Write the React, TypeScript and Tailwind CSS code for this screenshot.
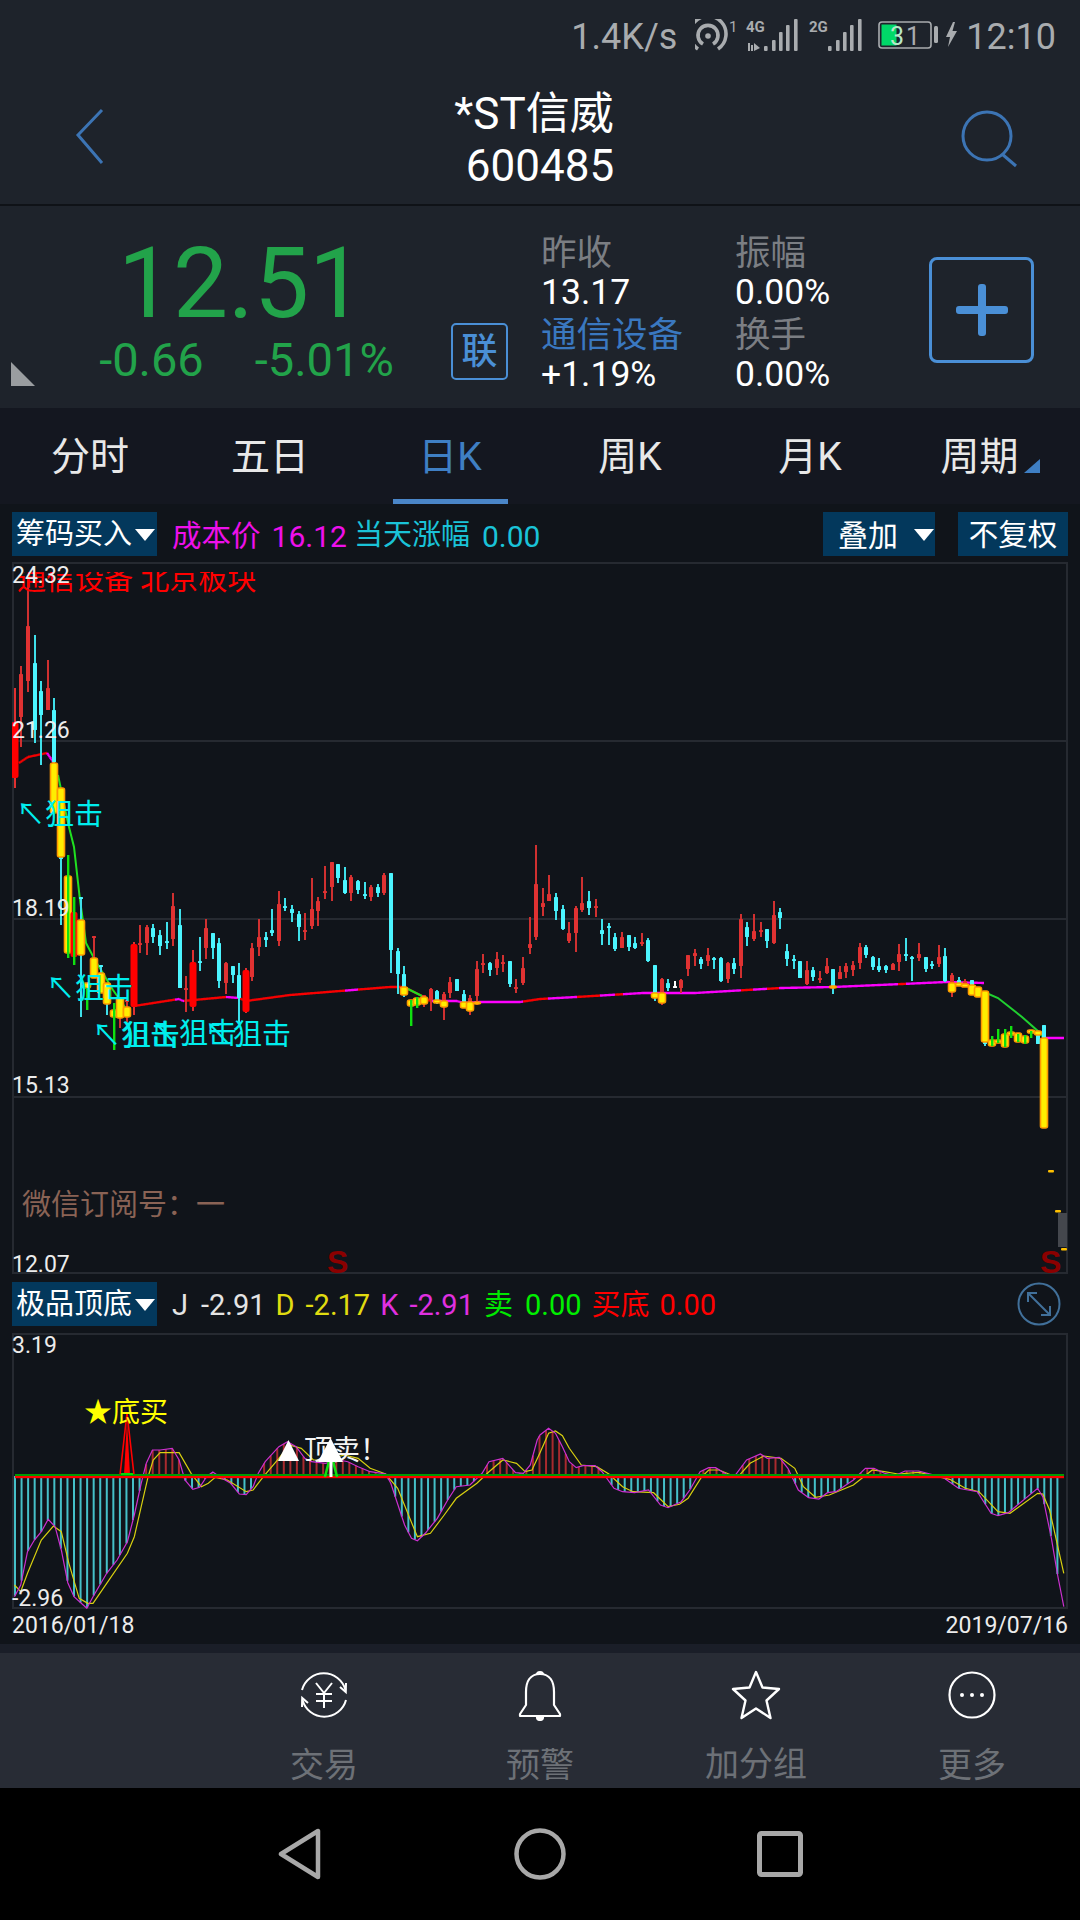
import React from "react";

type Kind = "r" | "c" | "R" | "y" | "w";
type Candle = [number, number, number, number, number, Kind];

const candles: Candle[] = [
  [15, 688, 722, 778, 788, "R"],
  [21, 666, 674, 717, 747, "r"],
  [28, 578, 626, 681, 692, "r"],
  [35, 635, 663, 730, 743, "c"],
  [41, 681, 691, 715, 765, "c"],
  [48, 660, 688, 710, 710, "r"],
  [54, 698, 710, 762, 763, "c"],
  [61, 857, 857, 858, 925, "c"],
  [81, 897, 897, 898, 1017, "c"],
  [94, 936, 936, 937, 958, "r"],
  [101, 965, 965, 966, 980, "c"],
  [107, 990, 990, 991, 1015, "c"],
  [120, 998, 998, 999, 1028, "r"],
  [127, 1000, 1000, 1001, 1025, "r"],
  [54, 763, 763, 813, 813, "y"],
  [61, 788, 788, 857, 857, "y"],
  [68, 876, 876, 953, 953, "y"],
  [74, 912, 912, 957, 957, "R"],
  [81, 920, 920, 955, 955, "y"],
  [87, 983, 983, 988, 988, "y"],
  [94, 958, 958, 978, 978, "y"],
  [101, 973, 973, 993, 993, "y"],
  [107, 983, 983, 1004, 1004, "y"],
  [114, 1010, 1010, 1017, 1017, "y"],
  [120, 998, 998, 1018, 1018, "y"],
  [127, 1007, 1007, 1017, 1017, "y"],
  [134, 942, 944, 1007, 1015, "R"],
  [140, 925, 943, 945, 953, "r"],
  [147, 925, 927, 943, 955, "r"],
  [153, 924, 928, 937, 943, "c"],
  [160, 930, 935, 946, 955, "c"],
  [167, 922, 941, 942, 949, "c"],
  [173, 893, 906, 939, 946, "r"],
  [180, 909, 925, 988, 988, "c"],
  [186, 976, 988, 989, 1012, "r"],
  [193, 950, 962, 1007, 1011, "R"],
  [200, 937, 961, 962, 971, "c"],
  [206, 919, 928, 948, 959, "r"],
  [213, 933, 933, 948, 959, "c"],
  [219, 938, 943, 981, 988, "c"],
  [226, 962, 963, 983, 994, "r"],
  [233, 966, 966, 975, 983, "c"],
  [239, 963, 975, 998, 1023, "c"],
  [246, 968, 970, 1012, 1013, "R"],
  [252, 943, 948, 977, 981, "r"],
  [259, 919, 937, 947, 956, "r"],
  [266, 932, 937, 940, 947, "c"],
  [272, 909, 930, 933, 936, "c"],
  [279, 891, 904, 941, 946, "r"],
  [285, 898, 906, 907, 911, "c"],
  [292, 905, 909, 913, 922, "c"],
  [299, 911, 914, 927, 941, "c"],
  [305, 913, 930, 931, 940, "r"],
  [312, 878, 909, 926, 929, "r"],
  [318, 897, 901, 911, 926, "r"],
  [325, 866, 891, 892, 899, "r"],
  [332, 862, 862, 887, 901, "r"],
  [338, 864, 864, 878, 883, "c"],
  [345, 867, 880, 893, 894, "c"],
  [351, 875, 877, 893, 901, "r"],
  [358, 880, 881, 890, 894, "c"],
  [365, 882, 894, 895, 899, "c"],
  [371, 885, 887, 897, 901, "r"],
  [378, 884, 887, 893, 897, "c"],
  [384, 873, 875, 893, 895, "r"],
  [391, 873, 873, 950, 973, "c"],
  [398, 948, 951, 974, 994, "c"],
  [404, 966, 974, 987, 997, "c"],
  [404, 987, 987, 995, 995, "y"],
  [411, 1000, 1000, 1006, 1006, "y"],
  [417, 998, 998, 1005, 1005, "y"],
  [424, 995, 995, 996, 1007, "r"],
  [424, 997, 997, 1004, 1004, "y"],
  [431, 988, 989, 1000, 1011, "r"],
  [437, 990, 991, 1000, 1004, "c"],
  [437, 1000, 1000, 1003, 1003, "y"],
  [444, 992, 994, 1001, 1020, "r"],
  [444, 1001, 1001, 1007, 1007, "y"],
  [450, 977, 982, 993, 998, "r"],
  [457, 979, 979, 991, 991, "c"],
  [464, 990, 994, 1002, 1002, "c"],
  [464, 1002, 1002, 1008, 1008, "y"],
  [470, 995, 998, 1002, 1015, "r"],
  [470, 1002, 1002, 1011, 1011, "y"],
  [477, 961, 969, 996, 1005, "r"],
  [477, 1002, 1002, 1003, 1003, "y"],
  [483, 954, 963, 964, 973, "r"],
  [490, 962, 963, 970, 976, "c"],
  [497, 952, 959, 968, 975, "r"],
  [503, 955, 962, 963, 972, "r"],
  [510, 961, 961, 984, 987, "c"],
  [516, 979, 987, 988, 993, "r"],
  [523, 957, 968, 983, 985, "r"],
  [530, 917, 944, 948, 954, "r"],
  [536, 845, 884, 937, 940, "r"],
  [543, 888, 903, 907, 916, "r"],
  [549, 875, 894, 901, 901, "r"],
  [556, 893, 897, 911, 920, "c"],
  [563, 905, 909, 929, 930, "c"],
  [569, 922, 933, 941, 943, "r"],
  [576, 906, 908, 933, 952, "r"],
  [582, 877, 903, 910, 912, "r"],
  [589, 891, 901, 908, 915, "c"],
  [596, 899, 906, 907, 917, "r"],
  [602, 919, 930, 934, 945, "c"],
  [609, 923, 926, 927, 945, "c"],
  [615, 933, 937, 949, 951, "c"],
  [622, 932, 937, 948, 948, "r"],
  [629, 935, 935, 947, 951, "c"],
  [635, 937, 943, 948, 949, "c"],
  [642, 933, 942, 943, 946, "r"],
  [648, 938, 940, 961, 962, "c"],
  [655, 965, 965, 993, 1001, "c"],
  [655, 993, 993, 998, 998, "y"],
  [662, 978, 979, 993, 1005, "r"],
  [662, 993, 993, 1003, 1003, "y"],
  [668, 979, 983, 988, 991, "c"],
  [675, 981, 986, 988, 988, "w"],
  [681, 979, 980, 988, 993, "r"],
  [688, 955, 955, 969, 976, "r"],
  [695, 949, 953, 956, 966, "r"],
  [701, 957, 959, 964, 969, "c"],
  [708, 948, 955, 961, 966, "r"],
  [714, 957, 958, 959, 969, "c"],
  [721, 957, 958, 981, 982, "c"],
  [728, 962, 963, 979, 983, "r"],
  [734, 958, 963, 969, 974, "c"],
  [741, 914, 919, 966, 978, "r"],
  [747, 922, 927, 937, 946, "c"],
  [754, 914, 931, 939, 941, "r"],
  [761, 922, 930, 931, 937, "r"],
  [767, 929, 929, 941, 948, "c"],
  [774, 901, 915, 943, 944, "r"],
  [780, 908, 912, 918, 929, "c"],
  [787, 944, 951, 959, 966, "c"],
  [794, 955, 959, 960, 969, "c"],
  [800, 961, 961, 978, 978, "c"],
  [807, 961, 970, 984, 985, "r"],
  [813, 967, 970, 977, 981, "c"],
  [820, 971, 978, 979, 983, "r"],
  [827, 958, 966, 973, 974, "r"],
  [833, 969, 969, 987, 994, "c"],
  [833, 986, 986, 987, 987, "y"],
  [840, 966, 972, 979, 979, "r"],
  [846, 963, 966, 972, 978, "r"],
  [853, 961, 965, 970, 976, "r"],
  [860, 943, 947, 963, 969, "r"],
  [866, 945, 947, 955, 958, "c"],
  [873, 956, 957, 967, 970, "c"],
  [879, 958, 966, 970, 972, "c"],
  [886, 965, 966, 970, 973, "c"],
  [893, 963, 964, 970, 970, "r"],
  [899, 944, 954, 962, 971, "r"],
  [906, 938, 954, 955, 961, "c"],
  [912, 956, 957, 958, 981, "c"],
  [919, 943, 954, 958, 961, "r"],
  [926, 957, 957, 969, 972, "c"],
  [932, 961, 964, 965, 969, "c"],
  [939, 945, 957, 964, 967, "r"],
  [945, 948, 956, 981, 982, "c"],
  [952, 973, 975, 983, 997, "r"],
  [952, 983, 983, 992, 992, "y"],
  [959, 977, 980, 983, 985, "c"],
  [959, 983, 983, 986, 986, "y"],
  [965, 979, 981, 984, 987, "r"],
  [965, 984, 984, 987, 987, "y"],
  [972, 980, 980, 985, 995, "c"],
  [972, 985, 985, 995, 995, "y"],
  [978, 987, 987, 997, 999, "y"],
  [985, 1042, 1042, 1043, 1046, "c"],
  [985, 991, 991, 1042, 1042, "y"],
  [992, 1040, 1040, 1046, 1046, "y"],
  [998, 1040, 1040, 1043, 1043, "y"],
  [1005, 1034, 1034, 1047, 1047, "y"],
  [1011, 1032, 1032, 1035, 1035, "y"],
  [1018, 1033, 1033, 1042, 1042, "y"],
  [1025, 1036, 1036, 1043, 1043, "y"],
  [1031, 1030, 1030, 1033, 1033, "y"],
  [1038, 1035, 1035, 1044, 1044, "c"],
  [1038, 1031, 1031, 1035, 1035, "y"],
  [1044, 1025, 1025, 1038, 1038, "c"],
  [1044, 1038, 1038, 1128, 1128, "y"],
];

const greenWicks: [number, number, number][] = [
  [68, 855, 958],
  [74, 897, 965],
  [87, 988, 1010],
  [114, 1003, 1050],
  [411, 1000, 1026],
  [417, 997, 1008],
  [992, 1036, 1046],
  [998, 1029, 1043],
  [1005, 1029, 1047],
  [1011, 1026, 1038],
  [1018, 1034, 1042],
  [1025, 1035, 1044],
  [1031, 1031, 1038],
];

const bodyFill: Record<Kind, string> = { r: "#e03232", c: "#4cf5ff", R: "#ff0000", y: "#ffee00", w: "#ffffff" };
const wickFill: Record<Kind, string> = { r: "#d03030", c: "#3fe0ea", R: "#e03030", y: "#ff9a00", w: "#ffffff" };

const cost: [number, number][] = [
  [19, 763], [28, 757], [47, 753], [54, 763],
  [134, 1006], [179, 999], [183, 1001], [226, 997], [239, 998], [246, 1001], [290, 995], [340, 991], [390, 987], [404, 987],
  [424, 997], [430, 1001], [457, 1001], [464, 1003], [480, 1002], [520, 1002], [540, 999], [576, 997], [643, 993], [695, 993], [781, 988], [833, 987], [902, 984], [946, 982], [984, 983],
  [1046, 1038], [1064, 1038],
];
const magentaRanges: [number, number][] = [
  [19, 19], [47, 58], [175, 184], [226, 238], [345, 358], [430, 523], [548, 577], [600, 615], [623, 741], [753, 767], [779, 898], [906, 984], [1046, 1064],
];
function isMagenta(x: number) {
  return magentaRanges.some(([a, b]) => x >= a && x < b);
}
function costSegments() {
  const out: { x1: number; y1: number; x2: number; y2: number; c: string }[] = [];
  for (let i = 0; i < cost.length - 1; i++) {
    const [ax, ay] = cost[i];
    const [bx, by] = cost[i + 1];
    if ((ax === 54 && bx === 134) || (ax === 984 && bx === 1046)) continue;
    for (let x = ax; x < bx; x += 1) {
      const t1 = (x - ax) / (bx - ax);
      const nx = Math.min(x + 1, bx);
      const t2 = (nx - ax) / (bx - ax);
      out.push({ x1: x, y1: ay + (by - ay) * t1, x2: nx, y2: ay + (by - ay) * t2, c: isMagenta(x) ? "#ff00ff" : "#ff0000" });
    }
  }
  return out;
}
const greenA = "58,775 68,823 74,847 80,900 86,943 95,960 113,990 125,1007";
const greenB = "404,987 424,997";
const greenC = "984,992 998,998 1022,1017 1039,1032 1044,1038";

const zL = (a: number[][]) => a.map(([x, y]) => [x / 2.904, 1270 + y / 3]);
const zR = (a: number[][]) => a.map(([x, y]) => [540 + x / 2.904, 1270 + y / 3]);

const K = [
  ...zL([[42,980],[60,945],[80,845],[100,810],[120,785],[140,748],[160,770],[178,840],[197,938],[215,980],[252,1015],[270,980],[310,910],[340,870],[370,815],[390,735],[410,640],[425,580],[443,540],[465,540],[500,535],[520,570],[537,630],[560,658],[580,652],[600,620],[618,606],[640,622],[670,640],[695,672],[715,674],[735,650],[750,610],[770,575],[810,530],[835,515],[860,530],[885,565],[905,575],[945,580],[985,570],[1010,575],[1040,590],[1075,605],[1120,612],[1135,640],[1175,765],[1195,805],[1212,812],[1235,790],[1270,745],[1300,690],[1325,650],[1365,645],[1400,610],[1420,575],[1460,565],[1497,608],[1520,610],[1540,585],[1560,510]]),
  ...zR([[0,495],[25,475],[45,490],[65,530],[85,575],[105,593],[125,587],[160,587],[180,605],[215,655],[240,665],[275,668],[315,660],[350,705],[372,713],[410,695],[435,660],[465,605],[490,593],[510,593],[540,612],[565,618],[600,570],[640,552],[660,565],[695,562],[720,595],[750,660],[780,683],[810,687],[835,668],[860,665],[910,630],[945,595],[970,595],[1000,610],[1030,617],[1060,603],[1100,603],[1150,617],[1170,622],[1215,655],[1270,665],[1310,730],[1330,737],[1360,728],[1445,655],[1460,680],[1485,805],[1503,915],[1521,1010]]),
];
const D = [
  ...zL([[42,945],[60,965],[80,910],[120,810],[155,768],[178,785],[200,880],[230,985],[255,1000],[270,1000],[310,940],[370,850],[390,800],[410,710],[430,620],[445,570],[465,548],[520,548],[555,610],[585,650],[605,640],[625,622],[660,630],[715,665],[735,660],[765,620],[810,565],[840,525],[875,535],[910,570],[945,570],[1000,555],[1040,565],[1075,595],[1120,612],[1155,655],[1190,745],[1212,800],[1250,790],[1290,735],[1325,685],[1385,640],[1420,605],[1460,570],[1500,580],[1525,605],[1545,600]]),
  ...zR([[0,548],[25,490],[45,483],[65,497],[85,535],[120,585],[165,590],[200,612],[240,650],[270,665],[330,668],[372,710],[405,703],[430,685],[470,620],[490,600],[520,600],[555,615],[580,615],[610,580],[650,558],[700,565],[740,595],[765,650],[800,682],[840,675],[910,645],[965,600],[1000,605],[1040,612],[1100,607],[1190,628],[1235,655],[1275,665],[1330,725],[1365,730],[1445,670],[1460,672],[1480,720],[1521,910]]),
];
function kAt(x: number) {
  for (let i = 0; i < K.length - 1; i++) {
    if (x >= K[i][0] && x <= K[i + 1][0]) {
      const t = (x - K[i][0]) / (K[i + 1][0] - K[i][0]);
      return K[i][1] + (K[i + 1][1] - K[i][1]) * t;
    }
  }
  return 1476;
}
const toPts = (a: number[][]) => a.map(([x, y]) => `${x.toFixed(1)},${y.toFixed(1)}`).join(" ");

function Tri() {
  return (
    <svg width="20" height="12" viewBox="0 0 20 12" className="shrink-0">
      <polygon points="0,0 20,0 10,12" fill="#ffffff" />
    </svg>
  );
}

function MainChart() {
  return (
    <svg className="absolute left-[-2px] top-[-2px] w-[1056px] h-[712px]" viewBox="12 562 1056 712">
      <rect x="12" y="740" width="1056" height="2" fill="#262a31" />
      <rect x="12" y="918" width="1056" height="2" fill="#262a31" />
      <rect x="12" y="1096" width="1056" height="2" fill="#262a31" />
      {costSegments().map((s, i) => (
        <line key={i} x1={s.x1} y1={s.y1} x2={s.x2} y2={s.y2} stroke={s.c} strokeWidth="2.4" />
      ))}
      <polyline points={greenA} fill="none" stroke="#20e020" strokeWidth="2" />
      <polyline points={greenB} fill="none" stroke="#20e020" strokeWidth="2" />
      <polyline points={greenC} fill="none" stroke="#20d030" strokeWidth="2" />
      {candles.map(([x, wt, bt, bb, wb, k], i) => {
        const isY = k === "y";
        const big = k === "R" || isY;
        const w = big ? 7 : 4;
        const h = Math.max(bb - bt, 2);
        return (
          <g key={i}>
            {wt < wb && !isY ? <rect x={x - 1} y={wt} width="2" height={wb - wt} fill={wickFill[k]} /> : null}
            <rect
              x={x - w / 2}
              y={bt}
              width={w}
              height={h}
              rx={big ? 2 : 0.5}
              fill={bodyFill[k]}
              stroke={isY ? "#ff9a00" : "none"}
              strokeWidth={isY ? 1.6 : 0}
            />
          </g>
        );
      })}
      {greenWicks.map(([x, a, b], i) => (
        <rect key={i} x={x - 1} y={a} width="2.4" height={b - a} fill="#10e010" />
      ))}
      <rect x="1048" y="1170" width="6" height="2.5" rx="1" fill="#ffc000" />
      <rect x="1055" y="1210" width="6" height="2.5" rx="1" fill="#ffc000" />
      <rect x="1061" y="1248" width="6" height="2.5" rx="1" fill="#ffc000" />
      <rect x="1058" y="1213" width="9" height="34" fill="#44474d" />
    </svg>
  );
}

function SubChart() {
  const bars: { x: number; y: number }[] = [];
  for (let i = 0; i <= 160; i++) {
    const x = 15 + i * 6.556;
    bars.push({ x, y: kAt(x) });
  }
  return (
    <svg className="absolute left-[-2px] top-[-2px] w-[1056px] h-[276px]" viewBox="12 1333 1056 276">
      {bars.map((b, i) =>
        Math.abs(b.y - 1476) < 1.5 ? null : (
          <rect
            key={i}
            x={b.x - 1}
            y={Math.min(b.y, 1476)}
            width="2"
            height={Math.abs(b.y - 1476)}
            fill={b.y > 1476 ? "#45c0c8" : "#a82a2e"}
          />
        ),
      )}
      <polyline points={toPts(D)} fill="none" stroke="#d8d010" strokeWidth="1.2" />
      <polyline points={toPts(K)} fill="none" stroke="#cc30d0" strokeWidth="1.2" />
      <polygon points="120,1475 127,1413 134,1475" fill="none" stroke="#ff0000" strokeWidth="1.6" />
      <polygon points="124,1475 127,1420 130,1475" fill="#ff0000" />
      <rect x="15" y="1474" width="1049" height="2" fill="#009a00" />
      <rect x="15" y="1476" width="1049" height="2.2" fill="#ff0000" />
      <rect x="121" y="1473" width="12" height="2" fill="#00dd00" />
      <polygon points="278,1461 299,1461 288.500,1440" fill="#ffffff" />
    </svg>
  );
}

function SubOverlay() {
  return (
    <svg className="absolute left-[-2px] top-[-2px] w-[1056px] h-[276px]" viewBox="12 1333 1056 276">
      <path d="M325,1477 L329,1461 M337,1477 L333,1461" stroke="#10e010" strokeWidth="2.6" fill="none" />
      <polygon points="318,1462 343,1462 330.500,1438" fill="#ffffff" />
      <rect x="329.500" y="1460" width="3" height="17" fill="#ffffff" />
    </svg>
  );
}

function ExchangeIcon() {
  return (
    <svg width="50" height="50" viewBox="0 0 50 50" fill="none" stroke="#ffffff" strokeWidth="2">
      <path d="M3 20 A22.500 22.500 0 0 1 46.500 20" />
      <path d="M47 13 L46.800 22 L41 17" />
      <path d="M47 30 A22.500 22.500 0 0 1 3.500 30" />
      <path d="M3 37 L3.200 28 L9 33" />
      <path d="M17 13 L25 23 L33 13 M25 23 V38 M17 24 H33 M17 31 H33" />
    </svg>
  );
}
function BellIcon() {
  return (
    <svg width="46" height="54" viewBox="0 0 46 54" fill="none" stroke="#ffffff" strokeWidth="2.200" strokeLinejoin="round">
      <path d="M20 8 A3 3 0 0 1 26 8" />
      <path d="M23 7 C13 7 9 15 9 25 V38 L3 47 V49 H43 V47 L37 38 V25 C37 15 33 7 23 7 Z" />
      <path d="M20 50 A3 3 0 0 0 26 50 Z" fill="#ffffff" />
    </svg>
  );
}
function StarIcon() {
  return (
    <svg width="52" height="52" viewBox="0 0 52 52" fill="none" stroke="#ffffff" strokeWidth="2.400" strokeLinejoin="round">
      <path d="M26 3 L32.500 18.500 L49 20 L36.500 31.500 L40.500 49 L26 39.500 L11.500 49 L15.500 31.500 L3 20 L19.500 18.500 Z" />
    </svg>
  );
}
function MoreIcon() {
  return (
    <svg width="50" height="50" viewBox="0 0 50 50" fill="none" stroke="#ffffff" strokeWidth="2.200">
      <circle cx="25" cy="25" r="22.500" />
      <circle cx="15" cy="25" r="2" fill="#ffffff" stroke="none" />
      <circle cx="25" cy="25" r="2" fill="#ffffff" stroke="none" />
      <circle cx="35" cy="25" r="2" fill="#ffffff" stroke="none" />
    </svg>
  );
}

function Cyan({ className, thick }: { className: string; thick?: boolean }) {
  return (
    <span className={`absolute text-[29px] leading-[34px] text-[#00eeee] whitespace-nowrap ${className}`}>
      ↖<span className={thick ? "[text-shadow:1px_0_0_#00eeee]" : ""}>狙击</span>
    </span>
  );
}

function Label({ className, children }: { className: string; children: React.ReactNode }) {
  return <span className={`absolute text-[23px] leading-[28px] text-[#ececec] ${className}`}>{children}</span>;
}

export default function App() {
  return (
    <div className="w-[1080px] h-[1920px] overflow-hidden flex flex-col bg-[#1e232b] font-['Roboto','Noto_Sans_CJK_SC',sans-serif]">
      {/* status bar */}
      <div className="h-[60px] flex justify-end items-center pt-[14px] pr-[24px] text-[#a9acaf] text-[36px] leading-none">
        <span>1.4K/s</span>
        <svg className="ml-[18px]" width="266" height="36" viewBox="695 20 266 36">
          <g fill="none" stroke="#a9acaf" strokeWidth="3.600" strokeLinecap="butt">
            <path d="M698 50 A18 18 0 1 1 718 50" />
            <path d="M703 45 A10 10 0 1 1 713 45" />
          </g>
          <circle cx="708" cy="37" r="2.800" fill="#a9acaf" />
          <text x="729" y="33" fontSize="15" fill="#a9acaf" fontFamily="Roboto">1</text>
          <text x="746" y="33" fontSize="15" fontWeight="700" fill="#a9acaf" fontFamily="Roboto">4G</text>
          <text x="809" y="33" fontSize="15" fontWeight="700" fill="#a9acaf" fontFamily="Roboto">2G</text>
          <g fill="#a9acaf">
            <rect x="748" y="44" width="2" height="8" />
            <rect x="751" y="46" width="2" height="6" />
            <polygon points="754,44 760,49 754,52" />
            <rect x="764" y="47" width="3.600" height="5" rx="1" />
            <rect x="772" y="41" width="3.600" height="11" rx="1" />
            <rect x="779" y="33" width="3.600" height="19" rx="1" />
            <rect x="786" y="26" width="3.600" height="26" rx="1" />
            <rect x="794" y="20" width="3.600" height="32" rx="1" />
            <rect x="828" y="47" width="3.600" height="5" rx="1" />
            <rect x="836" y="41" width="3.600" height="11" rx="1" />
            <rect x="843" y="33" width="3.600" height="19" rx="1" />
            <rect x="850" y="26" width="3.600" height="26" rx="1" />
            <rect x="858" y="20" width="3.600" height="32" rx="1" />
          </g>
          <rect x="879" y="23" width="52" height="26" rx="3" fill="none" stroke="#a9acaf" strokeWidth="1.600" />
          <rect x="881.500" y="25.500" width="15" height="21" fill="#00d868" />
          <text x="890" y="46" fontSize="25" fill="#b8e8c8" fontFamily="Roboto">3</text>
          <text x="906" y="46" fontSize="25" fill="#a9acaf" fontFamily="Roboto">1</text>
          <rect x="934" y="27" width="4" height="17" rx="1.500" fill="#a9acaf" />
          <polygon points="953,23 946,38 950,38 948,48 957,32 952.500,32 955,23" fill="#a9acaf" />
        </svg>
        <span className="ml-[5px]">12:10</span>
      </div>

      {/* title */}
      <div className="h-[144px] grid grid-cols-[1fr_auto_1fr] items-start">
        <svg className="mt-[48px] ml-[74px]" width="32" height="58" viewBox="0 0 32 58" fill="none" stroke="#3c74b4" strokeWidth="3">
          <path d="M28 2 L4 27 L28 55" />
        </svg>
        <div className="pt-[28px] flex flex-col items-center text-white text-[44px] leading-[52px]">
          <span className="mr-[12px]">*ST信威</span>
          <span>600485</span>
        </div>
        <svg className="mt-[50px] ml-auto mr-[60px]" width="60" height="60" viewBox="0 0 60 60" fill="none" stroke="#3c74b4" strokeWidth="3">
          <circle cx="27" cy="26" r="24" />
          <path d="M42 44 L56 56" />
        </svg>
      </div>
      <div className="h-[2px] bg-[#0f1217]" />

      {/* quote */}
      <div className="h-[202px] flex">
        <div className="relative w-[451px] flex flex-col items-center pl-[42px] pt-[18px]">
          <span className="mr-[11px] text-[98px] leading-[120px] text-[#22a34a]">12.51</span>
          <div className="flex gap-[51px] text-[47px] leading-[52px] text-[#22a34a] mt-[-10px] whitespace-nowrap">
            <span>-0.66</span>
            <span>-5.01%</span>
          </div>
          <svg className="absolute left-[11px] bottom-[22px]" width="24" height="24" viewBox="0 0 24 24">
            <polygon points="0,0 24,24 0,24" fill="#9a9da0" />
          </svg>
        </div>
        <div className="self-end mb-[28px] w-[57px] h-[57px] flex items-center justify-center rounded-[5px] border-2 border-[#4a8fd6] text-[#4a8fd6] text-[36px] leading-none font-medium">
          联
        </div>
        <div className="ml-[33px] mt-[25px] w-[194px] text-[35.500px] leading-[41px] text-white flex flex-col">
          <span className="text-[#7b7e83] translate-y-[2px]">昨收</span>
          <span>13.17</span>
          <span className="text-[#3a78c0] translate-y-[2px]">通信设备</span>
          <span>+1.19%</span>
        </div>
        <div className="mt-[25px] text-[35.500px] leading-[41px] text-white flex flex-col">
          <span className="text-[#7b7e83] translate-y-[2px]">振幅</span>
          <span>0.00%</span>
          <span className="text-[#7b7e83] translate-y-[2px]">换手</span>
          <span>0.00%</span>
        </div>
        <div className="ml-auto mr-[46px] mt-[51px] w-[105px] h-[106px] rounded-[8px] border-[3px] border-[#4a8fd6] flex items-center justify-center">
          <svg width="54" height="52" viewBox="0 0 54 52">
            <rect x="1" y="22" width="52" height="8" rx="3" fill="#4a8fd6" />
            <rect x="23" y="0" width="8" height="52" rx="3" fill="#4a8fd6" />
          </svg>
        </div>
      </div>

      {/* tabs */}
      <div className="h-[96px] grid grid-cols-6 bg-[#141720] text-[39px] text-[#e8e8e8] pt-[2px]">
        <div className="flex items-center justify-center">分时</div>
        <div className="flex items-center justify-center">五日</div>
        <div className="relative flex items-center justify-center text-[#3f7fc4]">
          日K
          <div className="absolute left-[33px] bottom-0 w-[115px] h-[5px] bg-[#4a86c8]" />
        </div>
        <div className="flex items-center justify-center">周K</div>
        <div className="flex items-center justify-center">月K</div>
        <div className="flex items-center justify-center">
          周期
          <svg className="ml-[5px] mt-[18px]" width="16" height="14" viewBox="0 0 16 14">
            <polygon points="16,0 16,14 0,14" fill="#3f7fc4" />
          </svg>
        </div>
      </div>

      {/* charts */}
      <div className="h-[1140px] bg-[#10141a] flex flex-col text-[30px]">
        <div className="mt-[8px] h-[44px] flex items-center [&>span]:translate-y-[2px]">
          <div className="ml-[12px] w-[145px] h-[44px] bg-[#03385c] text-white text-[29px] flex items-center pl-[4px] pt-[2px] gap-[3px] whitespace-nowrap">
            筹码买入
            <Tri />
          </div>
          <span className="ml-[15px] text-[29.500px] text-[#ee10ea]">成本价</span>
          <span className="ml-[11px] text-[#ee10ea]">16.12</span>
          <span className="ml-[7px] text-[29px] text-[#1ac3d8]">当天涨幅</span>
          <span className="ml-[12px] text-[#1ac3d8]">0.00</span>
          <div className="ml-auto w-[112px] h-[44px] bg-[#03385c] text-white text-[30px] flex items-center pl-[15px] pt-[2px] gap-[16px]">
            叠加
            <Tri />
          </div>
          <div className="ml-[23px] mr-[12px] w-[110px] h-[44px] bg-[#03385c] text-white text-[29.500px] flex items-center justify-center pt-[2px]">
            不复权
          </div>
        </div>

        <div className="relative mt-[6px] ml-[12px] w-[1056px] h-[712px] border-2 border-[#262a31]">
          <MainChart />
          <div className="absolute left-[3px] top-[8px] h-[30px] overflow-hidden">
            <div className="mt-[-7px] text-[29px] leading-[30px] text-[#ff0000] whitespace-nowrap">通信设备 北京板块</div>
          </div>
          <Cyan className="left-[2px] top-[234px]" />
          <Cyan className="left-[32px] top-[408px]" />
          <Cyan className="left-[78px] top-[455px]" thick />
          <Cyan className="left-[136px] top-[453px]" />
          <Cyan className="left-[190px] top-[454px]" />
          <Label className="left-[-2px] top-[-2px]">24.32</Label>
          <Label className="left-[-2px] top-[153px]">21.26</Label>
          <Label className="left-[-2px] top-[331px]">18.19</Label>
          <Label className="left-[-2px] top-[508px]">15.13</Label>
          <Label className="left-[-2px] top-[687px]">12.07</Label>
          <span className="absolute left-[8px] top-[621px] text-[29px] leading-[40px] text-[#8a6355] whitespace-nowrap">微信订阅号：一</span>
          <span className="absolute left-[313px] top-[680px] text-[32px] leading-[36px] font-bold text-[#8b0000] font-['Liberation_Sans',sans-serif]">S</span>
          <span className="absolute left-[1026px] top-[680px] text-[32px] leading-[36px] font-bold text-[#8b0000] font-['Liberation_Sans',sans-serif]">S</span>
        </div>

        <div className="mt-[8px] h-[44px] flex items-center text-[29px] [&>span]:translate-y-[2px]">
          <div className="ml-[12px] w-[145px] h-[44px] bg-[#03385c] text-white text-[29px] flex items-center pl-[4px] pt-[2px] gap-[3px] whitespace-nowrap">
            极品顶底
            <Tri />
          </div>
          <span className="ml-[15px] text-[#e4e4e4]">J</span>
          <span className="ml-[13px] text-[#e4e4e4]">-2.91</span>
          <span className="ml-[10px] text-[#e0dc10]">D</span>
          <span className="ml-[11px] text-[#e0dc10]">-2.17</span>
          <span className="ml-[10px] text-[#e030e0]">K</span>
          <span className="ml-[11px] text-[#e030e0]">-2.91</span>
          <span className="ml-[10px] text-[#00e800]">卖</span>
          <span className="ml-[12px] text-[#00f000]">0.00</span>
          <span className="ml-[10px] text-[#ff0000]">买底</span>
          <span className="ml-[10px] text-[#ff0000]">0.00</span>
          <svg className="ml-auto mr-[19px]" width="44" height="44" viewBox="0 0 44 44" fill="none" stroke="#41709a" strokeWidth="2">
            <circle cx="22" cy="22" r="20.500" />
            <path d="M11 11 L33 33 M11 20 V11 H20 M33 24 V33 H24" />
          </svg>
        </div>

        <div className="relative mt-[7px] ml-[12px] w-[1056px] h-[276px] border-2 border-[#262a31]">
          <SubChart />
          <Label className="left-[-2px] top-[-3px]">3.19</Label>
          <Label className="left-[-2px] top-[250px]">-2.96</Label>
          <span className="absolute left-[70px] top-[61px] text-[28px] leading-[34px] text-[#ffff00] whitespace-nowrap">★底买</span>
          <span className="absolute left-[290px] top-[99px] text-[28px] leading-[34px] text-[#f4f4f4] whitespace-nowrap">顶卖！</span>
          <SubOverlay />
        </div>

        <div className="flex-1 flex items-center justify-between px-[12px] text-[23px] text-[#ececec]">
          <span>2016/01/18</span>
          <span>2019/07/16</span>
        </div>
      </div>

      {/* stripe */}
      <div className="h-[9px] bg-[#1a1e28]" />

      {/* bottom tools */}
      <div className="h-[135px] bg-[#282c35] grid grid-cols-5 text-[#6d7177] text-[34px]">
        <div />
        <div className="flex flex-col items-center pt-[17px]">
          <ExchangeIcon />
          <span className="mt-[22px] leading-[46px]">交易</span>
        </div>
        <div className="flex flex-col items-center pt-[14px]">
          <BellIcon />
          <span className="mt-[21px] leading-[46px]">预警</span>
        </div>
        <div className="flex flex-col items-center pt-[16px]">
          <StarIcon />
          <span className="mt-[20px] leading-[46px]">加分组</span>
        </div>
        <div className="flex flex-col items-center pt-[17px]">
          <MoreIcon />
          <span className="mt-[22px] leading-[46px]">更多</span>
        </div>
      </div>

      {/* android nav */}
      <div className="flex-1 bg-black flex justify-center items-start pt-[40px]">
        <div className="w-[240px] h-[52px] flex items-center justify-center">
          <svg width="44" height="52" viewBox="0 0 44 52" fill="none" stroke="#a8a8a8" strokeWidth="4.500" strokeLinejoin="round">
            <path d="M40 3 V49 L3 26 Z" />
          </svg>
        </div>
        <div className="w-[240px] h-[52px] flex items-center justify-center">
          <svg width="52" height="52" viewBox="0 0 52 52" fill="none" stroke="#a8a8a8" strokeWidth="4.500">
            <circle cx="26" cy="26" r="23.500" />
          </svg>
        </div>
        <div className="w-[240px] h-[52px] flex items-center justify-center">
          <svg width="46" height="46" viewBox="0 0 46 46" fill="none" stroke="#a8a8a8" strokeWidth="5">
            <rect x="2.500" y="2.500" width="41" height="41" rx="2" />
          </svg>
        </div>
      </div>
    </div>
  );
}
